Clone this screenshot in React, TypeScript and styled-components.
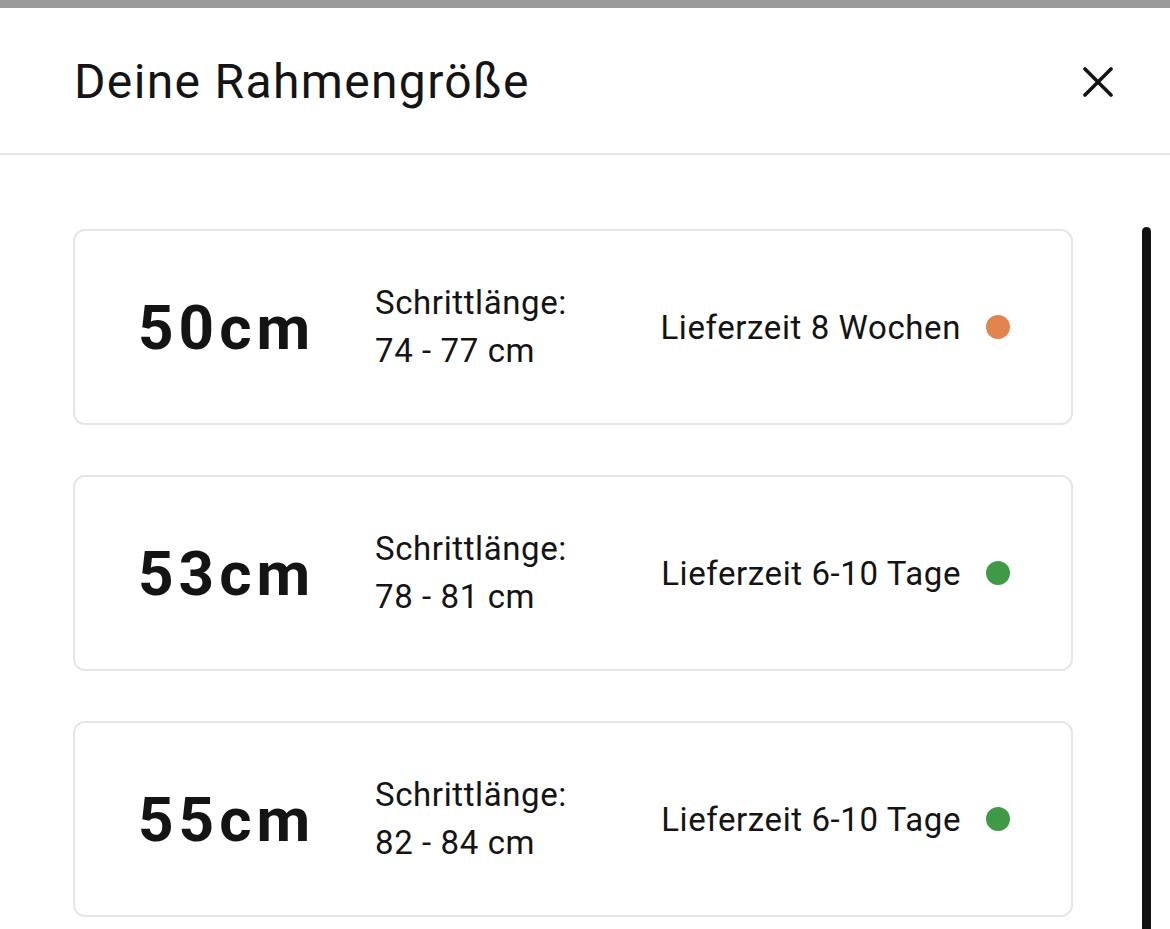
import React from 'react';
import styled, { createGlobalStyle } from 'styled-components';

const GlobalStyle = createGlobalStyle`
  html, body {
    margin: 0;
    padding: 0;
    background: #ffffff;
    overflow: hidden;
  }
  body {
    font-family: Roboto, "Liberation Sans", sans-serif;
    color: #141414;
  }
`;

const Page = styled.div`
  width: 1170px;
  height: 929px;
  overflow: hidden;
  border-top: 8px solid #9a9a9a;
  box-sizing: border-box;
`;

const Header = styled.header`
  display: flex;
  align-items: center;
  justify-content: space-between;
  height: 147px;
  padding: 2px 52px 0 74px;
  border-bottom: 2px solid #e7e7e7;
  box-sizing: border-box;
`;

const Title = styled.h1`
  margin: 0;
  font-size: 48px;
  font-weight: 400;
  letter-spacing: 1.35px;
  color: #141414;
`;

const CloseButton = styled.button`
  display: flex;
  align-items: center;
  justify-content: center;
  width: 40px;
  height: 40px;
  padding: 0;
  border: none;
  background: transparent;
  cursor: pointer;
`;

const Body = styled.main`
  display: flex;
  padding: 74px 0 0 73px;
`;

const List = styled.div`
  display: flex;
  flex-direction: column;
  gap: 50px;
  width: 1000px;
`;

const Card = styled.div`
  display: flex;
  align-items: center;
  height: 196px;
  padding: 0 61px 0 63px;
  border: 2px solid #e6e6e6;
  border-radius: 12px;
  box-sizing: border-box;
`;

const Size = styled.div`
  width: 237px;
  font-size: 62px;
  font-weight: 700;
  letter-spacing: 5px;
  color: #141414;
`;

const Stride = styled.div`
  display: flex;
  flex-direction: column;
  font-size: 33px;
  line-height: 48px;
  letter-spacing: 0.6px;
  color: #141414;
`;

const Delivery = styled.div`
  display: flex;
  align-items: center;
  gap: 25px;
  margin-left: auto;
  font-size: 33px;
  letter-spacing: 0.6px;
  color: #141414;
`;

const Dot = styled.span<{ color: string }>`
  width: 24px;
  height: 24px;
  border-radius: 50%;
  background: ${props => props.color};
`;

const Scrollbar = styled.div`
  width: 9px;
  height: 720px;
  margin: -2px 0 0 69px;
  background: #111111;
  border-radius: 5px 5px 0 0;
`;

const sizes = [
  { size: '50cm', stride: '74 - 77 cm', delivery: 'Lieferzeit 8 Wochen', color: '#e2844e' },
  { size: '53cm', stride: '78 - 81 cm', delivery: 'Lieferzeit 6-10 Tage', color: '#3f9a48' },
  { size: '55cm', stride: '82 - 84 cm', delivery: 'Lieferzeit 6-10 Tage', color: '#3f9a48' }
];

const App: React.FC = () => {
  return (
    <Page>
      <GlobalStyle />
      <Header>
        <Title>Deine Rahmengröße</Title>
        <CloseButton aria-label="Schließen">
          <svg width="30" height="30" viewBox="0 0 30 30">
            <path d="M2 2 L28 28 M28 2 L2 28" stroke="#141414" strokeWidth="3.6" strokeLinecap="round" />
          </svg>
        </CloseButton>
      </Header>
      <Body>
        <List>
          {sizes.map((item) => (
            <Card key={item.size}>
              <Size>{item.size}</Size>
              <Stride>
                <span>Schrittlänge:</span>
                <span>{item.stride}</span>
              </Stride>
              <Delivery>
                <span>{item.delivery}</span>
                <Dot color={item.color} />
              </Delivery>
            </Card>
          ))}
        </List>
        <Scrollbar />
      </Body>
    </Page>
  );
};

export default App;
